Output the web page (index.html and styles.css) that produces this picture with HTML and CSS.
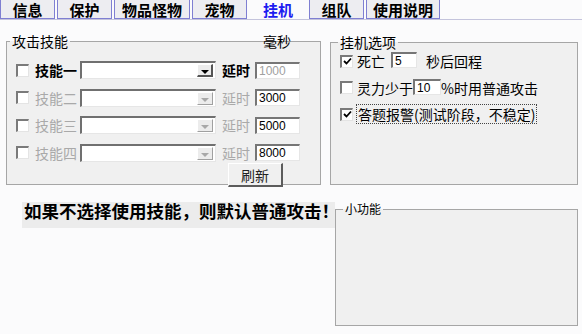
FILE: index.html
```html
<!DOCTYPE html>
<html lang="zh">
<head>
<meta charset="UTF-8" />
<title>挂机</title>
<link rel="stylesheet" href="styles.css">
</head>
<body>

<div class="tabs">
  <div class="tab">信息</div>
  <div class="tab">保护</div>
  <div class="tab wide">物品怪物</div>
  <div class="tab">宠物</div>
  <div class="tab active">挂机</div>
  <div class="tab">组队</div>
  <div class="tab">使用说明</div>
</div>

<div class="top">
  <fieldset class="group skills">
    <legend>攻击技能</legend>
    <span class="ms">毫秒</span>
    <div class="skill-rows">
      <div class="skill-row">
        <span class="chk"></span>
        <span class="skill-name on">技能一</span>
        <span class="combo"><span class="combo-btn"></span></span>
        <span class="delay on">延时</span>
        <span class="num grey">1000</span>
      </div>
      <div class="skill-row">
        <span class="chk"></span>
        <span class="skill-name">技能二</span>
        <span class="combo"><span class="combo-btn off"></span></span>
        <span class="delay">延时</span>
        <span class="num">3000</span>
      </div>
      <div class="skill-row">
        <span class="chk"></span>
        <span class="skill-name">技能三</span>
        <span class="combo"><span class="combo-btn off"></span></span>
        <span class="delay">延时</span>
        <span class="num">5000</span>
      </div>
      <div class="skill-row">
        <span class="chk"></span>
        <span class="skill-name">技能四</span>
        <span class="combo"><span class="combo-btn off"></span></span>
        <span class="delay">延时</span>
        <span class="num">8000</span>
      </div>
    </div>
    <button class="refresh">刷新</button>
  </fieldset>

  <fieldset class="group options">
    <legend>挂机选项</legend>
    <div class="opt-row">
      <span class="chk"><svg width="9" height="9" viewBox="0 0 9 9"><path d="M1 4 L3.5 6.5 L8 1.5" fill="none" stroke="#000" stroke-width="1.8"/></svg></span>
      <span class="opt-text">死亡</span>
      <span class="num small">5</span>
      <span class="opt-text">秒后回程</span>
    </div>
    <div class="opt-row">
      <span class="chk"></span>
      <span class="opt-text">灵力少于</span>
      <span class="num small tight">10</span>
      <span>%时用普通攻击</span>
    </div>
    <div class="opt-row">
      <span class="chk"><svg width="9" height="9" viewBox="0 0 9 9"><path d="M1 4 L3.5 6.5 L8 1.5" fill="none" stroke="#000" stroke-width="1.8"/></svg></span>
      <span class="opt-text focus">答题报警(测试阶段，不稳定)</span>
    </div>
  </fieldset>
</div>

<div class="bottom">
  <div class="notice">如果不选择使用技能，则默认普通攻击！</div>
  <fieldset class="group tools">
    <legend>小功能</legend>
  </fieldset>
</div>

</body>
</html>
```

FILE: styles.css
```css
body {
  margin: 0;
  width: 582px;
  height: 334px;
  overflow: hidden;
  background-color: #fbfbfc;
  font-family: "Noto Sans CJK SC", "Noto Sans", sans-serif;
  font-size: 14px;
  color: #000;
}

/* tab strip */
.tabs {
  display: flex;
  height: 19px;
  border-bottom: 1px solid #c4c4dc;
}
.tab {
  min-width: 55px;
  padding: 0 6px;
  margin-right: 2px;
  box-sizing: border-box;
  background: #ededf1;
  border: 1px solid #7f7fd2;
  border-top: none;
  font-size: 15px;
  font-weight: bold;
  line-height: 19px;
  text-align: center;
}
.tab.wide {
  padding: 0 7px;
}
.tab.active {
  min-width: 58px;
  background: #fbfbfc;
  border-color: transparent;
  color: #1c1cf0;
}

/* group boxes */
.top {
  display: flex;
  align-items: flex-start;
  margin-top: 13px;
  padding-left: 6px;
}
.group {
  margin: 0;
  min-width: 0;
  box-sizing: border-box;
  border: 1px solid #a6a6a6;
  background: #f0f0f0;
}
.group legend {
  padding: 0 2px;
  font-size: 14px;
  line-height: 16px;
}
.skills {
  position: relative;
  width: 315px;
  padding: 12px 0 0 9px;
}
.skills legend {
  margin-left: -6px;
}
.ms {
  position: absolute;
  top: -16px;
  left: 254px;
  padding: 0 2px;
  line-height: 16px;
}
.skill-rows {
  display: flex;
  flex-direction: column;
  gap: 9.5px;
}
.skill-row {
  display: flex;
  align-items: center;
  height: 18px;
}
.skill-name {
  width: 42px;
  margin: 0 3px 0 6px;
  color: #a9a9a9;
  line-height: 18px;
}
.delay {
  margin: 0 5px 0 6px;
  color: #a9a9a9;
  line-height: 18px;
}
.on {
  color: #000;
  font-weight: bold;
}

/* win classic controls */
.chk {
  display: inline-flex;
  align-items: center;
  justify-content: center;
  width: 13px;
  height: 13px;
  box-sizing: border-box;
  background: #fff;
  border-top: 2px solid #7a7a7a;
  border-left: 2px solid #7a7a7a;
  border-right: 1px solid #e4e4e4;
  border-bottom: 1px solid #e4e4e4;
  flex: none;
}
.combo {
  display: flex;
  justify-content: flex-end;
  align-items: stretch;
  width: 136px;
  height: 18px;
  box-sizing: border-box;
  padding: 1px 2px 1px 0;
  background: #fff;
  border-top: 2px solid #707070;
  border-left: 2px solid #707070;
  border-right: 1px solid #e6e6e6;
  border-bottom: 1px solid #e6e6e6;
}
.combo-btn {
  position: relative;
  width: 16px;
  box-sizing: border-box;
  background: #ececec;
  border-top: 1px solid #fff;
  border-left: 1px solid #fff;
  border-right: 2px solid #555;
  border-bottom: 2px solid #555;
}
.combo-btn::after {
  content: "";
  position: absolute;
  left: 3px;
  top: 5px;
  border-left: 4px solid transparent;
  border-right: 4px solid transparent;
  border-top: 4px solid #000;
}
.combo-btn.off {
  border-right: 1px solid #a0a0a0;
  border-bottom: 1px solid #a0a0a0;
}
.combo-btn.off::after {
  border-top-color: #a8a8a8;
}
.num {
  width: 45px;
  height: 17px;
  box-sizing: border-box;
  padding-left: 2px;
  background: #fff;
  border-top: 2px solid #767676;
  border-left: 2px solid #767676;
  border-right: 1px solid #e6e6e6;
  border-bottom: 1px solid #e6e6e6;
  font-family: "Liberation Sans", Arial, sans-serif;
  font-size: 12px;
  line-height: 14px;
}
.num.grey {
  color: #a0a0a0;
}
.refresh {
  display: block;
  width: 55px;
  height: 24px;
  margin: 1.5px 0 -3px 212px;
  padding: 0;
  background: #f0f0f0;
  border-top: 1px solid #fff;
  border-left: 1px solid #fff;
  border-right: 2px solid #5c5c5c;
  border-bottom: 2px solid #5c5c5c;
  font-family: inherit;
  font-size: 14px;
  color: #222;
}

/* options box */
.options {
  width: 248px;
  height: 151px;
  margin-left: 9px;
  margin-top: 1px;
  padding: 2px 0 0 9px;
}
.options legend {
  margin-left: -2px;
}
.opt-row {
  display: flex;
  align-items: center;
  height: 18px;
  margin-bottom: 8.5px;
}
.opt-text {
  margin-left: 4px;
  line-height: 18px;
}
.num.small {
  width: 26px;
  height: 16px;
  margin: -3px 5px 0 6px;
}
.num.tight {
  width: 28px;
  margin: -2px 0 0 0;
}
.focus {
  outline: 1px dotted #444;
  outline-offset: 0;
  padding: 0 1px;
}

/* bottom area */
.bottom {
  display: flex;
  align-items: flex-start;
  margin-top: 17px;
  padding-left: 22px;
}
.notice {
  width: 313px;
  height: 26px;
  padding-left: 2px;
  box-sizing: border-box;
  background: #ececec;
  font-size: 17.5px;
  font-weight: bold;
  line-height: 18px;
  white-space: nowrap;
}
.tools {
  width: 243px;
  height: 124px;
  padding: 0;
}
.tools legend {
  margin-left: 7px;
  font-size: 12px;
  line-height: 14px;
}
```
